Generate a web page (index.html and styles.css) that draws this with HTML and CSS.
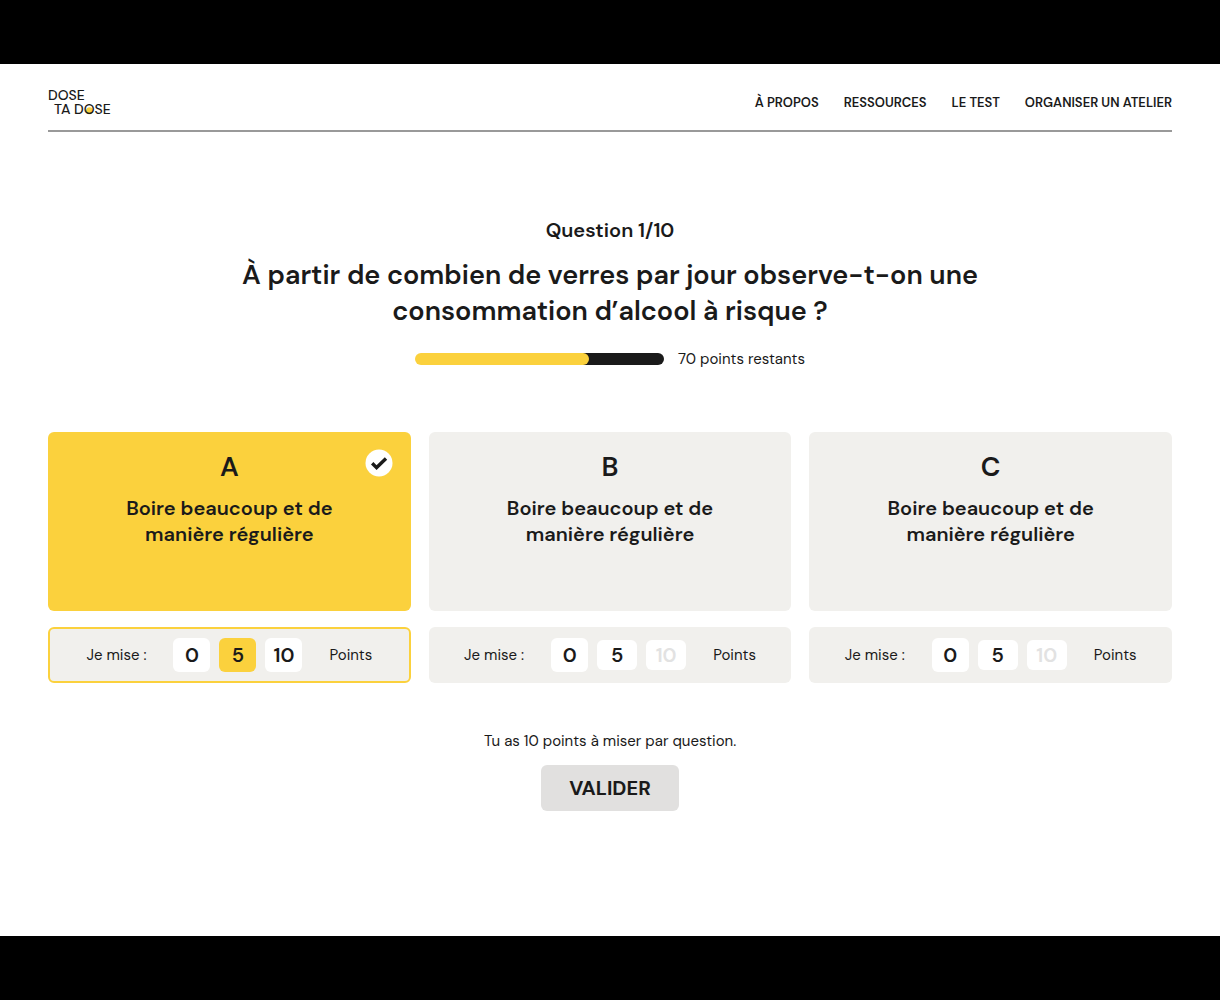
FILE: index.html
```html
<!DOCTYPE html>
<html lang="fr">
<head>
<meta charset="utf-8">
<meta name="viewport" content="width=device-width, initial-scale=1">
<title>Dose ta dose – Question 1/10</title>
<link rel="stylesheet" href="styles.css">
</head>
<body>
<div class="page">
  <header class="header">
    <a class="logo" href="#"><span>DOSE</span><span class="logo-second">TA D<span class="logo-o">O</span>SE</span></a>
    <nav class="nav" aria-label="Navigation principale">
      <a href="#">À PROPOS</a>
      <a href="#">RESSOURCES</a>
      <a href="#">LE TEST</a>
      <a href="#">ORGANISER UN ATELIER</a>
    </nav>
  </header>

  <main class="quiz">
    <p class="step">Question 1/10</p>
    <h1 class="question">À partir de combien de verres par jour observe-t-on une consommation d’alcool à risque ?</h1>
    <div class="budget">
      <div class="bar"><div class="bar-fill" style="width: 70%"></div></div>
      <span>70 points restants</span>
    </div>

    <form class="form">
      <div class="answers">
        <section class="answer">
          <div class="card card-selected">
            <svg class="check" viewBox="0 0 28 28" aria-hidden="true"><circle cx="14" cy="14" r="13.5" fill="#fff"/><path d="M7.2 14.2 11.6 18.6 21 9.6" fill="none" stroke="#1a1a1a" stroke-width="3.4"/></svg>
            <h2 class="letter">A</h2>
            <p class="text">Boire beaucoup et de manière régulière</p>
          </div>
          <div class="stake stake-selected" role="radiogroup" aria-label="Mise sur la réponse A">
            <span>Je mise :</span>
            <div class="chips">
              <label class="chip"><input type="radio" name="a" value="0"><span>0</span></label>
              <label class="chip"><input type="radio" name="a" value="5" checked><span>5</span></label>
              <label class="chip"><input type="radio" name="a" value="10"><span>10</span></label>
            </div>
            <span>Points</span>
          </div>
        </section>
        <section class="answer">
          <div class="card">
            <h2 class="letter">B</h2>
            <p class="text">Boire beaucoup et de manière régulière</p>
          </div>
          <div class="stake" role="radiogroup" aria-label="Mise sur la réponse B">
            <span>Je mise :</span>
            <div class="chips">
              <label class="chip"><input type="radio" name="b" value="0"><span>0</span></label>
              <label class="chip chip-low"><input type="radio" name="b" value="5"><span>5</span></label>
              <label class="chip chip-low"><input type="radio" name="b" value="10" disabled><span>10</span></label>
            </div>
            <span>Points</span>
          </div>
        </section>
        <section class="answer">
          <div class="card">
            <h2 class="letter">C</h2>
            <p class="text">Boire beaucoup et de manière régulière</p>
          </div>
          <div class="stake" role="radiogroup" aria-label="Mise sur la réponse C">
            <span>Je mise :</span>
            <div class="chips">
              <label class="chip"><input type="radio" name="c" value="0"><span>0</span></label>
              <label class="chip chip-low"><input type="radio" name="c" value="5"><span>5</span></label>
              <label class="chip chip-low"><input type="radio" name="c" value="10" disabled><span>10</span></label>
            </div>
            <span>Points</span>
          </div>
        </section>
      </div>
      <p class="hint">Tu as 10 points à miser par question.</p>
      <button class="submit" type="button">VALIDER</button>
    </form>
  </main>
</div>
</body>
</html>
```
FILE: styles.css
```css
:root {
  --ink: #1a1a1a;
  --yellow: #fbd13d;
  --sand: #f1f0ed;
}

* { box-sizing: border-box; }

body {
  display: flex;
  flex-direction: column;
  min-height: 100vh;
  margin: 0;
  padding: 64px 0;
  background: #000;
  color: var(--ink);
  font: 400 15px/20px "DM Sans", Inter, "Open Sans", sans-serif;
}

h1, h2, p { margin: 0; }
a { color: inherit; text-decoration: none; }

.page {
  flex: 1;
  padding: 0 48px;
  background: #fff;
}

.header {
  display: flex;
  flex-wrap: wrap;
  justify-content: space-between;
  align-items: center;
  gap: 12px 20px;
  padding: 25px 0 14px;
  border-bottom: 2px solid #999;
}

.logo {
  display: flex;
  flex-direction: column;
  font-size: 14px;
  line-height: 13px;
  font-weight: 500;
}

.logo-second {
  padding: 1px 0 0 6px;
}

.logo-o {
  background: radial-gradient(circle at 50% 60%, var(--yellow) 3px, transparent 4px);
}

.nav {
  display: flex;
  flex-wrap: wrap;
  gap: 8px 25px;
  font-size: 13px;
  font-weight: 600;
}

.quiz {
  display: flex;
  flex-direction: column;
  align-items: center;
  padding: 84px 0 64px;
  text-align: center;
}

.step {
  font-size: 20px;
  line-height: 28px;
  font-weight: 600;
}

.question {
  max-width: 780px;
  margin-top: 13px;
  font-size: 27px;
  line-height: 36px;
  font-weight: 600;
}

.budget {
  display: flex;
  align-items: center;
  gap: 14px;
  margin-top: 20px;
}

.bar {
  width: 249px;
  height: 12px;
  border-radius: 6px;
  background: linear-gradient(to right, transparent 50%, var(--ink) 50%);
}

.bar-fill {
  height: 100%;
  border-radius: 6px;
  background: var(--yellow);
}

.form {
  display: flex;
  flex-direction: column;
  align-items: center;
  align-self: stretch;
  margin-top: 63px;
}

.answers {
  display: grid;
  grid-template-columns: repeat(auto-fit, minmax(320px, 1fr));
  align-self: stretch;
  gap: 18px;
}

.answer {
  display: flex;
  flex-direction: column;
  gap: 16px;
}

.card {
  position: relative;
  display: flex;
  flex-direction: column;
  align-items: center;
  min-height: 179px;
  padding: 17px 48px;
  border-radius: 6px;
  background: var(--sand);
}

.card-selected { background: var(--yellow); }

.check {
  position: absolute;
  top: 17px;
  right: 18px;
  width: 28px;
  height: 28px;
}

.letter {
  font-size: 27px;
  line-height: 36px;
  font-weight: 600;
}

.text {
  max-width: 240px;
  margin-top: 10px;
  font-size: 20px;
  line-height: 26px;
  font-weight: 600;
}

.stake {
  display: flex;
  justify-content: center;
  align-items: center;
  gap: 27px;
  min-height: 56px;
  border: 2px solid transparent;
  border-radius: 6px;
  background: var(--sand);
}

.stake-selected { border-color: var(--yellow); }

.chips {
  display: flex;
  align-items: center;
  gap: 9px;
}

.chip {
  position: relative;
  display: grid;
  place-items: center;
  width: 37px;
  height: 34px;
  border-radius: 6px;
  background: #fff;
  font-size: 20px;
  font-weight: 600;
  cursor: pointer;
}

.chip-low { width: 40px; height: 30px; }
.chip:has(input:checked) { background: var(--yellow); }
.chip:has(input:disabled) { color: #e2e2e2; cursor: default; }

.chip input {
  position: absolute;
  inset: 0;
  margin: 0;
  opacity: 0;
}

.hint { margin-top: 48px; }

.submit {
  margin-top: 14px;
  padding: 9px 28px;
  border: 0;
  border-radius: 6px;
  background: #e1e0df;
  color: inherit;
  font: inherit;
  font-size: 20px;
  line-height: 28px;
  font-weight: 700;
  cursor: pointer;
}
```
